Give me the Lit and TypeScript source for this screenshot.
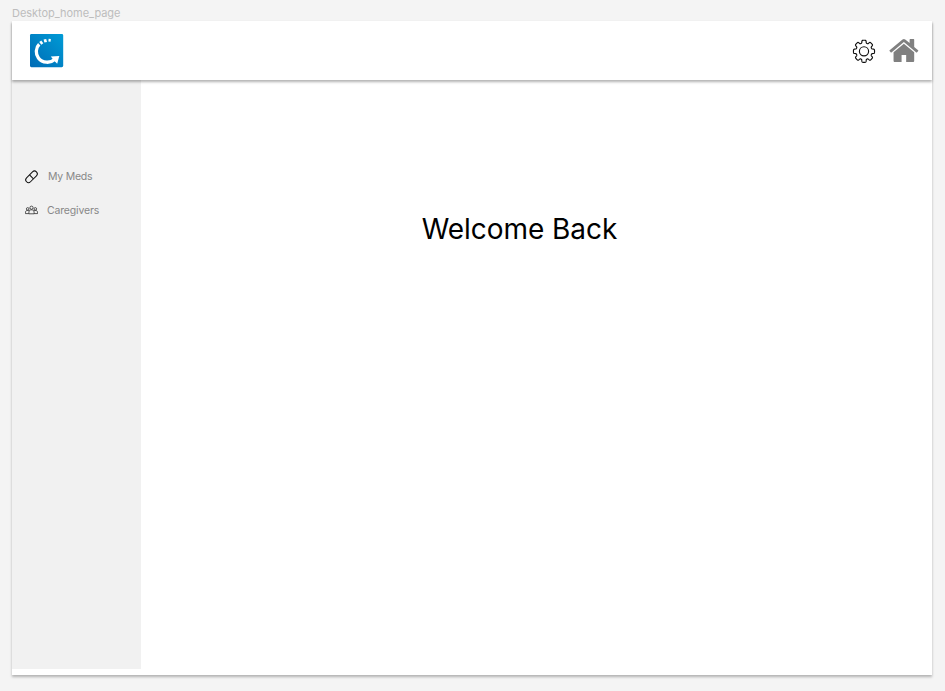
import { LitElement, html, css, svg } from "lit";
import { customElement } from "lit/decorators.js";

// Closed outline of an eight-toothed cog centred on the origin.
function cogOutline(): string {
  const points: string[] = [];
  for (let i = 0; i < 384; i++) {
    const a = (i / 384) * Math.PI * 2;
    const wave = Math.tanh(2.8 * (Math.cos(8 * a) + 0.3));
    const r = 9.25 + 1.3 * wave;
    points.push(`${(r * Math.cos(a)).toFixed(2)} ${(r * 1.05 * Math.sin(a)).toFixed(2)}`);
  }
  return `M${points.join("L")}Z`;
}

const logo = svg`
  <defs>
    <linearGradient id="blue" x1="1" y1="0" x2="0" y2="1">
      <stop offset="0" stop-color="#009bd6"></stop>
      <stop offset="1" stop-color="#006bb5"></stop>
    </linearGradient>
  </defs>
  <rect width="33.2" height="33.2" rx="1.4" fill="url(#blue)"></rect>
  <g fill="none" stroke="#fff">
    <path d="M9.2 10.3C5.6 13.8 5.4 20 8.4 24C12.3 29.2 20.5 29.6 24.8 25.2" stroke-width="3.3"></path>
    <path d="M10.3 9.4L12.3 7.9" stroke-width="3.4"></path>
    <path d="M14 7.1L16.6 6.4" stroke-width="3.1"></path>
    <path d="M18.5 6.2L20.7 6.4" stroke-width="2.7"></path>
  </g>
  <path fill="#fff" d="M20.8 22.4L29.3 22L27.2 29.8L24.9 27.5Z"></path>`;

@customElement("app-root")
export class AppRoot extends LitElement {
  static styles = css`
    :host {
      display: block;
      box-sizing: border-box;
      height: 691px;
      padding: 5px 13px 0 12px;
      overflow: hidden;
      background: #f4f4f4;
      font-family: Inter, sans-serif;
    }
    svg {
      display: block;
      flex: none;
      overflow: visible;
    }
    .label {
      height: 16px;
      font-size: 11px;
      line-height: 16px;
      letter-spacing: -0.04px;
      color: #bdbdbd;
      white-space: nowrap;
    }
    .frame {
      display: flex;
      flex-direction: column;
      height: 654px;
      background: #fff;
      box-shadow: 0 2px 2.5px rgba(0, 0, 0, 0.27);
    }
    header {
      display: flex;
      align-items: center;
      box-sizing: border-box;
      flex: none;
      height: 59px;
      padding: 0 14px 0 18px;
      background: #fff;
      box-shadow: 0 2px 2.5px rgba(0, 0, 0, 0.3);
      z-index: 1;
    }
    .actions {
      display: flex;
      align-items: center;
      gap: 15px;
      margin-left: auto;
    }
    .body {
      display: flex;
      flex: none;
      height: 589px;
    }
    nav {
      box-sizing: border-box;
      width: 129px;
      padding: 86px 0 0 13px;
      background: #f1f1f1;
    }
    .item {
      display: flex;
      align-items: center;
      gap: 9px;
      height: 20px;
      margin-bottom: 14px;
      font-size: 10.5px;
      letter-spacing: -0.17px;
      color: #888;
      white-space: nowrap;
    }
    .item.wide {
      gap: 10px;
      letter-spacing: -0.25px;
    }
    main {
      flex: 1;
      padding-top: 131px;
      text-align: center;
    }
    h1 {
      margin: 0;
      padding-right: 34px;
      font-size: 28px;
      line-height: 36px;
      font-weight: 370;
      letter-spacing: -0.05px;
      color: #000;
    }
  `;

  render() {
    return html`
      <div class="label">Desktop_home_page</div>
      <div class="frame">
        <header>
          <svg width="33" height="33" viewBox="0 0 33 33">${logo}</svg>
          <div class="actions">
            <svg width="22" height="24" viewBox="-11 -12.3 22 24" fill="none" stroke="#111" stroke-width="1.15">
              <path d=${cogOutline()}></path>
              <circle r="4.6"></circle>
            </svg>
            <svg width="28" height="23" viewBox="64 253 1550 1283" fill="#808080">
              <path
                d="M1408 992v480q0 26-19 45t-45 19h-384v-384h-256v384h-384q-26 0-45-19t-19-45v-480q0-1 .5-3t.5-3l575-474 575 474q1 2 1 6zm223-69l-62 74q-8 9-21 11h-3q-13 0-21-7l-692-577-692 577q-12 8-24 7-13-2-21-11l-62-74q-8-10-7-23.5t11-21.5l719-599q32-26 76-26t76 26l244 204v-195q0-14 9-23t23-9h192q14 0 23 9t9 23v408l219 182q10 8 11 21.5t-7 23.5z"
              ></path>
            </svg>
          </div>
        </header>
        <div class="body">
          <nav>
            <div class="item wide">
              <svg width="13" height="13" viewBox="0 0 13 13" fill="none" stroke="#111" stroke-width="1">
                <g transform="rotate(-45 6.5 6.8)">
                  <rect x="-0.5" y="4" width="14" height="5.6" rx="2.8"></rect>
                  <path d="M6.5 4V9.6"></path>
                </g>
              </svg>
              <span>My Meds</span>
            </div>
            <div class="item">
              <svg width="13" height="10" viewBox="0 0 13 10" fill="none" stroke="#222" stroke-width="0.75">
                <circle cx="6.5" cy="2.7" r="1.6"></circle>
                <circle cx="2.7" cy="3.9" r="1.3"></circle>
                <circle cx="10.3" cy="3.9" r="1.3"></circle>
                <path d="M3.9 8.8V7.2C3.9 5.6 5 4.8 6.5 4.8S9.1 5.6 9.1 7.2V8.8Z"></path>
                <path d="M3.9 8.6H.5V7.2C.5 6 1.4 5.4 2.7 5.4Q3.6 5.4 4.2 5.9"></path>
                <path d="M9.1 8.6H12.5V7.2C12.5 6 11.6 5.4 10.3 5.4Q9.4 5.4 8.8 5.9"></path>
              </svg>
              <span>Caregivers</span>
            </div>
          </nav>
          <main><h1>Welcome Back</h1></main>
        </div>
      </div>
    `;
  }
}
